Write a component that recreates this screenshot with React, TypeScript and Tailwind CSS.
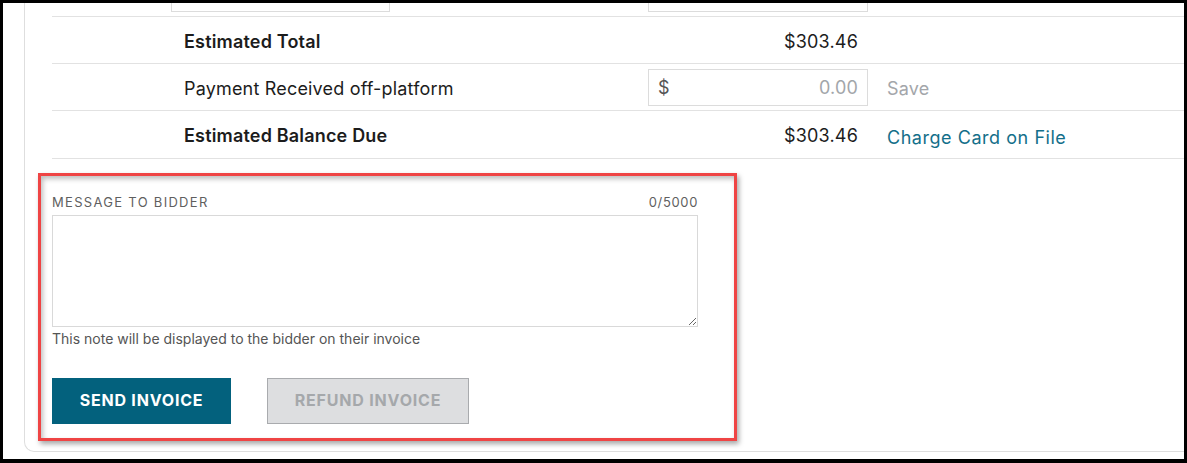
import React from "react";

const rowCls = "grid grid-cols-[119px_477px_220px_1fr] items-center border-b border-[#e2e2e2]";

const App: React.FC = () => {
  return (
    <div
      className="w-[1187px] h-[463px] overflow-hidden bg-white border-black border-t-[3px] border-l-[3px] border-r-[3px] border-b-[4px] text-[#1c1c1c]"
      style={{ fontFamily: "Inter, 'Noto Sans', sans-serif" }}
    >
      <div className="-mt-[33px] ml-[21px] border-l border-b border-[#dedede] rounded-bl-[10px] pl-[27px]">
        {/* row cut off at the top */}
        <div className={`${rowCls} h-[47px]`}>
          <div />
          <div className="h-[37px] w-[219px] border border-[#dcdcdc]" />
          <div className="h-[37px] w-[220px] border border-[#dcdcdc]" />
          <div />
        </div>

        <div className={`${rowCls} h-[47px] text-[18px] tracking-[0.01em]`}>
          <div />
          <div className="pl-[13px] pt-[2px] font-semibold">Estimated Total</div>
          <div className="pr-[10px] pt-[2px] text-right">$303.46</div>
          <div />
        </div>

        <div className={`${rowCls} h-[47px] text-[18px] tracking-[0.01em]`}>
          <div />
          <div className="pl-[13px] pt-[2px]">Payment Received off-platform</div>
          <div className="h-[37px] w-[220px] border border-[#dcdcdc] flex items-center justify-between px-[9px] pt-[1px]">
            <span className="text-[#555]">$</span>
            <span className="text-[#a3a6aa]">0.00</span>
          </div>
          <div className="pl-[19px] pt-[2px] text-[#a3a6aa]">Save</div>
        </div>

        <div className={`${rowCls} h-[48px] text-[18px] tracking-[0.01em]`}>
          <div />
          <div className="pl-[13px] pt-[2px] font-semibold">Estimated Balance Due</div>
          <div className="pr-[10px] pt-[2px] text-right">$303.46</div>
          <div className="pl-[19px] pt-[6px] text-[#136f8a] tracking-[0.03em]">Charge Card on File</div>
        </div>

        {/* message to bidder */}
        <div className="relative w-[646px] pt-[35px] pb-[27px]">
          <div className="flex justify-between text-[13px] leading-[16px] tracking-[0.1em] text-[#5f5f5f]">
            <span>MESSAGE TO BIDDER</span>
            <span className="tracking-[0.05em]">0/5000</span>
          </div>
          <textarea className="mt-[5px] block h-[112px] w-full border border-[#d9d9d9] outline-none" />
          <p className="mt-[3px] text-[14px] leading-[17px] text-[#555]">
            This note will be displayed to the bidder on their invoice
          </p>
          <div className="mt-[31px] flex gap-[36px]">
            <button className="h-[46px] w-[179px] pb-[2px] bg-[#03617d] text-white text-[16px] font-bold tracking-[0.05em]">
              SEND INVOICE
            </button>
            <button className="h-[46px] w-[202px] pb-[2px] bg-[#dddee0] border border-[#a9abae] text-[#a5a8ab] text-[16px] font-bold tracking-[0.05em]">
              REFUND INVOICE
            </button>
          </div>

          {/* red highlight drawn over the section */}
          <div className="absolute -left-[14px] top-[14px] w-[699px] h-[268px] border-[3px] border-[#ef4444] shadow-[2px_3px_5px_rgba(0,0,0,0.35),inset_2px_3px_5px_rgba(0,0,0,0.25)] pointer-events-none" />
        </div>
      </div>
    </div>
  );
};

export default App;
